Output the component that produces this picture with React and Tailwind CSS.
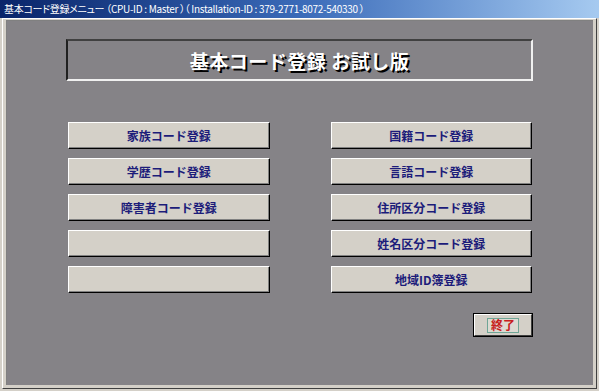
const leftButtons = ['家族コード登録', '学歴コード登録', '障害者コード登録', '', ''];
const rightButtons = ['国籍コード登録', '言語コード登録', '住所区分コード登録', '姓名区分コード登録', '地域ID簿登録'];

function CodeButton({ label }) {
  return (
    <button className="h-[27px] w-full bg-[#d4d0c8] border border-t-white border-l-white border-r-black border-b-black shadow-[inset_-1px_-1px_0_#808080] flex items-center justify-center text-[12px] font-bold text-[#1c1c7a] leading-none">
      {label}
    </button>
  );
}

export default function App() {
  return (
    <div
      className="w-[599px] h-[391px] bg-[#d4d0c8] flex flex-col overflow-hidden"
      style={{ fontFamily: '"Noto Sans CJK JP", "Noto Sans", sans-serif' }}
    >
      <div className="h-[18px] shrink-0 bg-gradient-to-r from-[#0a246a] via-[#3a6ab8] to-[#a6caf0] flex items-center px-[4px] text-white text-[10px] tracking-[-0.3px] leading-none whitespace-nowrap [font-feature-settings:'palt']">
        基本コード登録メニュー （CPU-ID : Master ）（ Installation-ID : 379-2771-8072-540330 ）
      </div>
      <div className="flex-1 flex p-[2px] pt-0">
        <div className="flex-1 border border-t-white border-l-white border-r-[#404040] border-b-[#404040] px-[3px] pt-[1px] pb-[3px] flex">
          <div className="flex-1 bg-[#858387] border-t border-l border-t-[#808080] border-l-[#808080] flex flex-col">
            <div className="mt-[18px] ml-[59px] mr-[60px] h-[42px] border-2 border-t-[#404040] border-l-[#202020] border-b-[#f0f0f0] border-r-[#f0f0f0] flex items-center justify-center">
              <span className="text-white font-bold text-[19px] leading-none [text-shadow:2px_2px_0_#000] tracking-[0.5px]">
                基本コード登録 お試し版
              </span>
            </div>
            <div className="mt-[41px] mx-[61px] grid grid-cols-2 gap-x-[61px]">
              <div className="flex flex-col gap-[9px]">
                {leftButtons.map((label, i) => (
                  <CodeButton key={i} label={label} />
                ))}
              </div>
              <div className="flex flex-col gap-[9px]">
                {rightButtons.map((label, i) => (
                  <CodeButton key={i} label={label} />
                ))}
              </div>
            </div>
            <div className="mt-[20px] mr-[60px] flex justify-end">
              <button className="w-[60px] h-[24px] border border-black bg-[#d4d0c8] flex">
                <span className="flex-1 border border-t-white border-l-white border-r-[#404040] border-b-[#404040] flex items-center justify-center">
                  <span className="px-[3px] h-[15px] border border-[#6fa596] bg-[#dcdad2] flex items-center text-[12px] font-bold text-[#c82020] leading-none">
                    終了
                  </span>
                </span>
              </button>
            </div>
          </div>
        </div>
      </div>
    </div>
  );
}
